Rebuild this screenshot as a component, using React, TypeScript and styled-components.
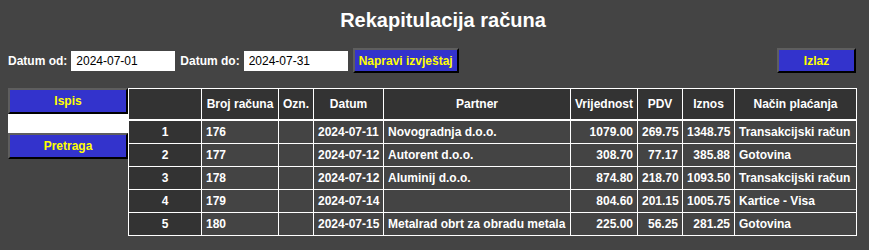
import React from "react";
import styled, {createGlobalStyle} from "styled-components";

const GlobalStyle = createGlobalStyle`
    body {
        margin: 0;
        background: #444444;
        font-family: "Liberation Sans", Arial, sans-serif;
        color: #fff;
    }
`

type RowType = {
    broj: string
    datum: string
    partner: string
    vrijednost: string
    pdv: string
    iznos: string
    nacin: string
}

const rows: RowType[] = [
    {broj: "176", datum: "2024-07-11", partner: "Novogradnja d.o.o.", vrijednost: "1079.00", pdv: "269.75", iznos: "1348.75", nacin: "Transakcijski račun"},
    {broj: "177", datum: "2024-07-12", partner: "Autorent d.o.o.", vrijednost: "308.70", pdv: "77.17", iznos: "385.88", nacin: "Gotovina"},
    {broj: "178", datum: "2024-07-12", partner: "Aluminij d.o.o.", vrijednost: "874.80", pdv: "218.70", iznos: "1093.50", nacin: "Transakcijski račun"},
    {broj: "179", datum: "2024-07-14", partner: "", vrijednost: "804.60", pdv: "201.15", iznos: "1005.75", nacin: "Kartice - Visa"},
    {broj: "180", datum: "2024-07-15", partner: "Metalrad obrt za obradu metala", vrijednost: "225.00", pdv: "56.25", iznos: "281.25", nacin: "Gotovina"},
]

const columns = [
    {title: "", width: 73},
    {title: "Broj računa", width: 77},
    {title: "Ozn.", width: 35},
    {title: "Datum", width: 70},
    {title: "Partner", width: 187},
    {title: "Vrijednost", width: 67},
    {title: "PDV", width: 45},
    {title: "Iznos", width: 52},
    {title: "Način plaćanja", width: 122},
]

export default function App() {
    return (
        <Page>
            <GlobalStyle/>
            <Title>Rekapitulacija računa</Title>
            <Controls>
                <Label>Datum od:</Label>
                <DateInput defaultValue="2024-07-01"/>
                <Label>Datum do:</Label>
                <DateInput defaultValue="2024-07-31"/>
                <Button>Napravi izvještaj</Button>
                <ExitButton>Izlaz</ExitButton>
            </Controls>
            <Content>
                <Sidebar>
                    <SideButton>Ispis</SideButton>
                    <SearchInput/>
                    <SideButton>Pretraga</SideButton>
                </Sidebar>
                <Table>
                    <colgroup>
                        {columns.map((c, i) => <col key={i} style={{width: c.width}}/>)}
                    </colgroup>
                    <thead>
                    <tr>
                        {columns.map((c, i) => <Th key={i}>{c.title}</Th>)}
                    </tr>
                    </thead>
                    <tbody>
                    {rows.map((r, i) => (
                        <tr key={r.broj}>
                            <IndexCell>{i + 1}</IndexCell>
                            <Td>{r.broj}</Td>
                            <Td></Td>
                            <Td>{r.datum}</Td>
                            <Td>{r.partner}</Td>
                            <Td $right>{r.vrijednost}</Td>
                            <Td $right>{r.pdv}</Td>
                            <Td $right>{r.iznos}</Td>
                            <Td>{r.nacin}</Td>
                        </tr>
                    ))}
                    </tbody>
                </Table>
            </Content>
        </Page>
    )
}

const Page = styled.div`
    padding: 9px 8px 0;
    width: 848px;
`
const Title = styled.h1`
    margin: 0;
    width: 853px;
    padding-left: 17px;
    box-sizing: border-box;
    text-align: center;
    font-size: 20px;
    line-height: 23px;
    font-weight: 700;
`
const Controls = styled.div`
    display: flex;
    align-items: center;
    margin-top: 16px;
    height: 25px;
`
const Label = styled.span`
    font-size: 12px;
    font-weight: 700;
    margin-right: 4px;
`
const DateInput = styled.input`
    width: 104px;
    height: 20px;
    box-sizing: border-box;
    border: none;
    outline: none;
    padding: 0 5px;
    margin-right: 5px;
    background: #fff;
    color: #000;
    font-family: "Liberation Sans", Arial, sans-serif;
    font-size: 12px;
`
const Button = styled.button`
    height: 25px;
    box-sizing: border-box;
    padding: 0 4px;
    background: #3333cc;
    color: #ffff00;
    border: 2px solid;
    border-color: #5e5e5e #000 #000 #5e5e5e;
    font-family: "Liberation Sans", Arial, sans-serif;
    font-size: 12px;
    font-weight: 700;
    cursor: pointer;
`
const ExitButton = styled(Button)`
    margin-left: auto;
    width: 79px;
`
const Content = styled.div`
    display: flex;
    align-items: flex-start;
    margin-top: 15px;
`
const Sidebar = styled.div`
    display: flex;
    flex-direction: column;
    width: 120px;
`
const SideButton = styled(Button)`
    width: 120px;
    height: 26px;
`
const SearchInput = styled.input`
    height: 19px;
    box-sizing: border-box;
    border: none;
    outline: none;
    background: #fff;
`
const Table = styled.table`
    width: 728px;
    table-layout: fixed;
    border-collapse: collapse;
    font-size: 12px;
    font-weight: 700;
`
const Th = styled.th`
    height: 30px;
    padding: 0 2px;
    background: #333333;
    border: 1px solid #fff;
    border-bottom: 2px solid #fff;
    text-align: center;
    white-space: nowrap;
`
const Td = styled.td<{ $right?: boolean }>`
    height: 22px;
    padding: 0 4px;
    border: 1px solid #fff;
    text-align: ${p => p.$right ? 'right' : 'left'};
    white-space: nowrap;
    overflow: hidden;
`
const IndexCell = styled(Td)`
    background: #333333;
    text-align: center;
`
